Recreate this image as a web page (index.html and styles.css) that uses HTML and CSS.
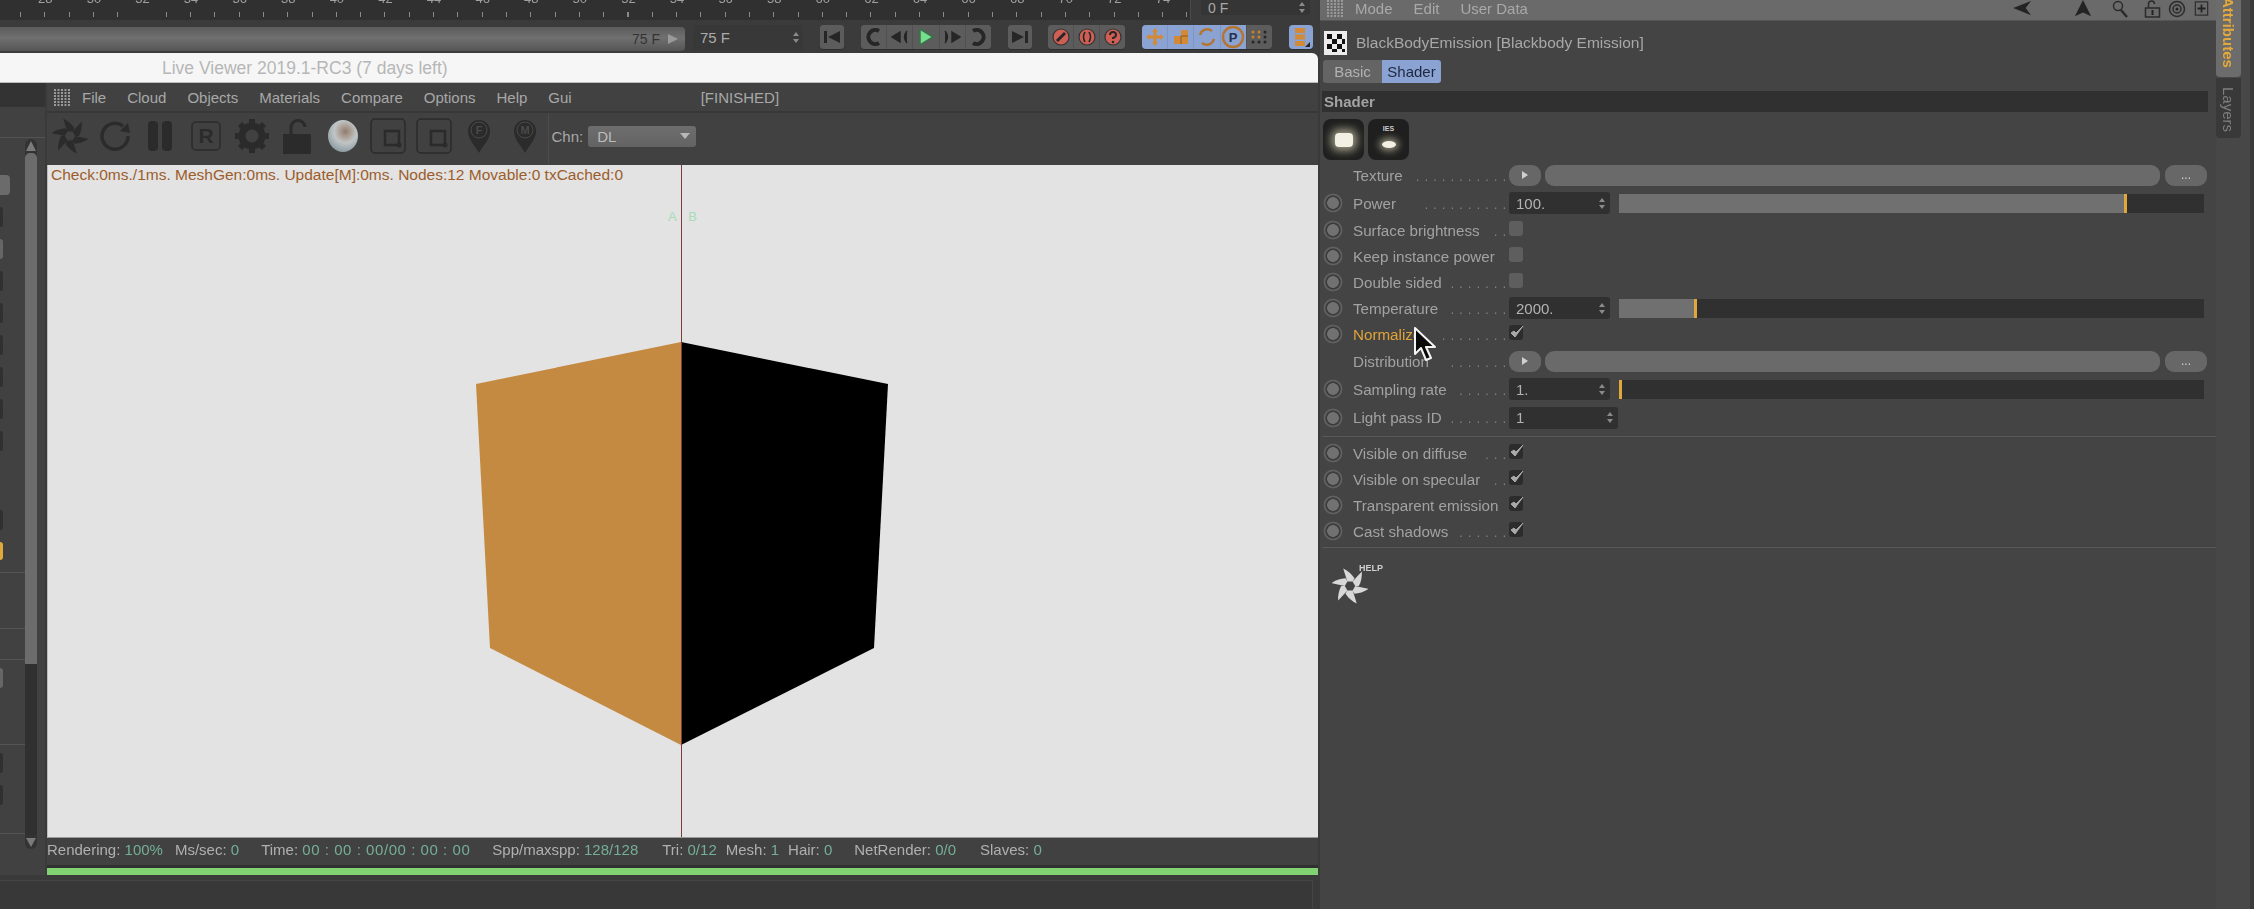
FILE: index.html
```html
<!DOCTYPE html>
<html lang="en">
<head>
<meta charset="utf-8">
<title>Live Viewer</title>
<link rel="stylesheet" href="styles.css">
</head>
<body>
<svg class="defs" width="0" height="0" aria-hidden="true">
  <defs>
    <g id="logo">
      <g id="blades">
        <path id="blade" d="M-3 -5 L-7.500 -19.500 Q0.500 -15.500 5 -8.500 L3 -5 Z"/>
        <use href="#blade" transform="rotate(60)"/>
        <use href="#blade" transform="rotate(120)"/>
        <use href="#blade" transform="rotate(180)"/>
        <use href="#blade" transform="rotate(240)"/>
        <use href="#blade" transform="rotate(300)"/>
      </g>
    </g>
    <g id="gridicon">
      <path d="M0 1h16M0 4h16M0 7h16M0 10h16M0 13h16M0 16h16" stroke-dasharray="2 1.5" stroke-width="2" fill="none"/>
    </g>
    <g id="spin">
      <path d="M3 0 L6 4 H0Z M3 11 L6 7 H0Z"/>
    </g>
    <g id="check">
      <path d="M2 8 L6 12 L14 1 L7 8 L5 6 Z" stroke-width="1" stroke-linejoin="round"/>
    </g>
  </defs>
</svg>
<div class="app">
  <main class="main">
    <section class="timeline">
      <div class="ruler-row">
        <div class="ruler">
          <div class="nums"><span>28</span><span>30</span><span>32</span><span>34</span><span>36</span><span>38</span><span>40</span><span>42</span><span>44</span><span>46</span><span>48</span><span>50</span><span>52</span><span>54</span><span>56</span><span>58</span><span>60</span><span>62</span><span>64</span><span>66</span><span>68</span><span>70</span><span>72</span><span>74</span></div>
          <div class="ticks"></div>
        </div>
        <div class="frame-zero"><span>0 F</span><svg class="spin-ic" width="6" height="11"><use href="#spin"/></svg></div>
      </div>
      <div class="transport">
        <div class="range"><span class="range-val">75 F</span><svg class="range-arrow" width="12" height="12" viewBox="0 0 12 12"><path d="M1 1 L11 6 L1 11Z"/></svg></div>
        <div class="frame-end"><span>75 F</span><svg class="spin-ic" width="6" height="11"><use href="#spin"/></svg></div>
        <div class="grp g-first"><button class="cell"><svg width="20" height="14" viewBox="0 0 20 14"><path d="M2 1h3v12H2z M18 1v12L6 7z"/></svg></button></div>
        <div class="grp g-play">
          <button class="cell"><svg width="18" height="20" viewBox="0 0 18 20"><path d="M14 4 A7 7 0 1 0 14 16" fill="none" stroke-width="4"/></svg></button>
          <button class="cell"><svg width="18" height="14" viewBox="0 0 18 14"><path d="M1 7 L9 2V12Z M16 1 Q11 7 16 13" stroke-width="1.5"/></svg></button>
          <button class="cell"><svg width="20" height="20" viewBox="0 0 20 20"><path class="play" d="M4 2 L17 10 L4 18Z"/></svg></button>
          <button class="cell"><svg width="18" height="14" viewBox="0 0 18 14"><path d="M17 7 L9 2V12Z M2 1 Q7 7 2 13" stroke-width="1.5"/></svg></button>
          <button class="cell"><svg width="18" height="20" viewBox="0 0 18 20"><path d="M4 4 A7 7 0 1 1 4 16" fill="none" stroke-width="4"/></svg></button>
        </div>
        <div class="grp g-last"><button class="cell"><svg width="20" height="14" viewBox="0 0 20 14"><path d="M15 1h3v12h-3z M2 1v12L14 7z"/></svg></button></div>
        <div class="grp g-red">
          <button class="cell"><svg width="20" height="20" viewBox="0 0 20 20"><circle class="red" cx="10" cy="10" r="8"/><path class="nofill" d="M6 14 L14 6" stroke-width="3"/></svg></button>
          <button class="cell"><svg width="20" height="20" viewBox="0 0 20 20"><circle class="red" cx="10" cy="10" r="8"/><path class="nofill" d="M8 5 Q5 10 8 15 M12 5 Q15 10 12 15" stroke-width="1.6"/></svg></button>
          <button class="cell"><svg width="20" height="20" viewBox="0 0 20 20"><circle class="red" cx="10" cy="10" r="8"/><path class="nofill" d="M7 8 Q7 5 10 5 Q13 5 13 8 Q13 10 10 11 V12" stroke-width="2"/><circle cx="10" cy="15" r="1.3"/></svg></button>
        </div>
        <div class="grp g-blue">
          <button class="cell on"><svg width="20" height="20" viewBox="0 0 20 20"><path class="org" d="M10 1 L13 5 H11.5 V8.5 H15 V7 L19 10 L15 13 V11.5 H11.5 V15 H13 L10 19 L7 15 H8.500 V11.500 H5 V13 L1 10 L5 7 V8.500 H8.500 V5 H7Z"/></svg></button>
          <button class="cell on"><svg width="18" height="18" viewBox="0 0 18 18"><path class="org" d="M2 8h7V2h7v14H2z"/><path class="line" d="M9 8v8M9 8h7"/></svg></button>
          <button class="cell on"><svg width="20" height="20" viewBox="0 0 20 20"><path class="org-line" d="M15 4 A7.500 7.500 0 0 0 3 8 M5 16 A7.500 7.500 0 0 0 17 12" /></svg></button>
          <button class="cell on"><svg width="24" height="24" viewBox="0 0 24 24"><circle class="org-line" cx="12" cy="12" r="10"/><text class="p-txt" x="12" y="16.500" text-anchor="middle">P</text></svg></button>
          <button class="cell"><svg width="18" height="16" viewBox="0 0 18 16"><circle class="dot-o" cx="3" cy="3" r="1.500"/><circle class="dot-o" cx="9" cy="3" r="1.500"/><circle cx="15" cy="3" r="1.500"/><circle class="dot-o" cx="3" cy="8" r="1.500"/><circle class="dot-o" cx="9" cy="8" r="1.500"/><circle cx="15" cy="8" r="1.500"/><circle cx="3" cy="13" r="1.500"/><circle cx="9" cy="13" r="1.500"/><circle cx="15" cy="13" r="1.500"/></svg></button>
        </div>
        <div class="grp g-film">
          <button class="cell on"><svg width="18" height="22" viewBox="0 0 18 22"><path class="org" d="M3 2h10v5H3zM3 8.500h10v5H3zM3 15h10v5H3z"/><path d="M13 21 L18 16 V21Z"/></svg></button>
        </div>
      </div>
    </section>

    <section class="viewer">
      <div class="titlebar">Live Viewer 2019.1-RC3 (7 days left)</div>
      <div class="viewer-body">
        <aside class="leftcol">
          <div class="left-dark"></div>
          <div class="left-head"></div>
          <div class="left-body">
            <div class="stubs">
              <div class="stub stub-drop"></div>
              <div class="stub"></div><div class="stub stub-light"></div><div class="stub"></div><div class="stub"></div>
              <div class="stub"></div><div class="stub"></div><div class="stub"></div><div class="stub"></div>
              <div class="stub stub-far"></div>
              <div class="stub stub-org"></div>
              <div class="rule rule-a"></div>
              <div class="rule rule-b"></div>
              <div class="rule rule-c"></div>
              <div class="stub stub-light stub-near"></div>
              <div class="rule rule-d"></div>
              <div class="stub stub-near"></div>
              <div class="stub"></div>
              <div class="rule rule-e"></div>
            </div>
            <div class="scroll">
              <svg class="scroll-arrow" width="12" height="14" viewBox="0 0 12 14"><path d="M6 2 L11 12 H1Z"/></svg>
              <div class="thumb"></div>
              <div class="track"></div>
              <svg class="scroll-arrow" width="12" height="14" viewBox="0 0 12 14"><path d="M1 3 H11 L6 12Z"/></svg>
            </div>
          </div>
        </aside>
        <div class="viewer-main">
          <nav class="menubar">
            <svg class="grid-ic" width="16" height="17"><use href="#gridicon"/></svg>
            <span>File</span><span>Cloud</span><span>Objects</span><span>Materials</span><span>Compare</span><span>Options</span><span>Help</span><span>Gui</span>
            <span class="finished">[FINISHED]</span>
          </nav>
          <div class="toolbar">
            <div class="tool"><svg width="36" height="38" viewBox="-20 -20 40 40"><use href="#logo"/></svg></div>
            <div class="tool"><svg width="32" height="32" viewBox="0 0 32 32"><path class="stroke" d="M24 6 A13 13 0 1 0 29 16" stroke-width="3.500"/><path d="M21 11 L31 13 L29 3Z"/></svg></div>
            <div class="tool"><svg class="pause" width="26" height="32" viewBox="0 0 26 32"><rect x="1" y="1" width="10" height="30" rx="4"/><rect x="15" y="1" width="10" height="30" rx="4"/></svg></div>
            <div class="tool"><svg width="30" height="30" viewBox="0 0 30 30"><rect class="stroke" x="1" y="1" width="28" height="28" rx="4" stroke-width="1.500"/><text class="r-txt" x="15" y="22" text-anchor="middle">R</text></svg></div>
            <div class="tool"><svg width="36" height="36" viewBox="0 0 36 36"><circle class="stroke" cx="18" cy="18" r="10" stroke-width="7"/><path class="stroke" d="M18 1v7M18 28v7M1 18h7M28 18h7M6 6l5 5M25 25l5 5M30 6l-5 5M11 25l-5 5" stroke-width="6"/></svg></div>
            <div class="tool"><svg width="30" height="36" viewBox="0 0 30 36"><path class="stroke" d="M9 17 V10 A7 7 0 0 1 23 9" stroke-width="3"/><rect x="1" y="16" width="28" height="20" rx="1"/></svg></div>
            <div class="tool"><div class="sphere"></div></div>
            <div class="tool"><svg width="36" height="36" viewBox="0 0 36 36"><rect class="stroke" x="1" y="1" width="34" height="34" rx="4" stroke-width="1.500"/><path class="stroke" d="M15 13 H29 V27 H15Z" stroke-width="2.500"/><circle cx="29" cy="27" r="2.500"/></svg></div>
            <div class="tool"><svg width="36" height="36" viewBox="0 0 36 36"><rect class="stroke" x="1" y="1" width="34" height="34" rx="4" stroke-width="1.500"/><path class="stroke" d="M15 13 H29 V27 H15Z" stroke-width="2.500"/><circle cx="29" cy="27" r="2.500"/></svg></div>
            <div class="tool"><svg width="24" height="36" viewBox="0 0 24 36"><path d="M12 35 C8 27 1 22 1 13 A11 11 0 0 1 23 13 C23 22 16 27 12 35Z"/><circle class="pin-hole" cx="12" cy="12" r="8"/><text class="pin-txt" x="12" y="16" text-anchor="middle">F</text></svg></div>
            <div class="tool"><svg width="24" height="36" viewBox="0 0 24 36"><path d="M12 35 C8 27 1 22 1 13 A11 11 0 0 1 23 13 C23 22 16 27 12 35Z"/><circle class="pin-hole" cx="12" cy="12" r="8"/><text class="pin-txt" x="12" y="16" text-anchor="middle">M</text></svg></div>
            <div class="chn">
              <span>Chn:</span>
              <div class="chn-drop"><span>DL</span><svg width="10" height="6" viewBox="0 0 10 6"><path d="M0 0h10L5 6z"/></svg></div>
            </div>
          </div>
          <div class="viewport">
            <div class="stats">Check:0ms./1ms. MeshGen:0ms. Update[M]:0ms. Nodes:12 Movable:0 txCached:0</div>
            <div class="ab"><span>A</span><span>B</span></div>
            <svg class="cube" width="420" height="410" viewBox="0 0 420 410">
              <path class="cube-l" d="M4 42 L209 0 V403 L18 306Z"/>
              <path class="cube-r" d="M209 0 L416 42 L402 306 L209 403Z"/>
            </svg>
            <div class="split"></div>
          </div>
          <div class="status">
            <span class="st">Rendering: <b>100%</b></span>
            <span class="st g12">Ms/sec: <b>0</b></span>
            <span class="st g22">Time: <b class="wide">00 : 00 : 00/00 : 00 : 00</b></span>
            <span class="st g22">Spp/maxspp: <b>128/128</b></span>
            <span class="st g24">Tri: <b>0/12</b></span>
            <span class="st g9">Mesh: <b>1</b></span>
            <span class="st g9">Hair: <b>0</b></span>
            <span class="st g22">NetRender: <b>0/0</b></span>
            <span class="st g24">Slaves: <b>0</b></span>
          </div>
          <div class="progress"><div class="progress-fill"></div></div>
        </div>
      </div>
      <div class="bottom"><div class="bottom-in"></div></div>
    </section>
  </main>

  <aside class="side">
    <div class="attr">
      <header class="attr-head">
        <svg class="grid-ic" width="16" height="17"><use href="#gridicon"/></svg>
        <span>Mode</span><span>Edit</span><span>User Data</span>
        <div class="nav-icons">
          <svg class="n1" width="20" height="16" viewBox="0 0 22 18"><path d="M0 8 L20 0 L14 8 L20 16Z"/></svg>
          <svg class="n2" width="18" height="18" viewBox="0 0 18 20"><path d="M9 0 L18 18 L9 14 L0 18Z"/></svg>
          <svg class="n3" width="16" height="18" viewBox="0 0 16 18"><circle class="stroke" cx="6" cy="6" r="4.500" stroke-width="1.500"/><path class="stroke" d="M9 10 L15 17" stroke-width="2.500"/></svg>
          <svg class="n4" width="17" height="18" viewBox="0 0 16 18"><path class="stroke" d="M1 8h14v9H1zM4 8V4a3 3 0 0 1 6 0" stroke-width="1.500"/><path d="M7 10h2v5H7z"/></svg>
          <svg class="n5" width="20" height="18" viewBox="0 0 18 18"><circle class="stroke" cx="9" cy="9" r="7.500" stroke-width="1.500"/><circle class="stroke" cx="9" cy="9" r="4" stroke-width="1.500"/><circle cx="9" cy="9" r="1.500"/></svg>
          <svg class="n6" width="17" height="15" viewBox="0 0 16 17"><rect class="stroke" x="1" y="1" width="14" height="15" stroke-width="1.300"/><path d="M7 4h2v3.500h3.500v2H9V13H7V9.500H3.500v-2H7z"/></svg>
        </div>
      </header>
      <div class="objtitle">
        <svg width="23" height="24" viewBox="0 0 23 24"><rect class="chk-bg" width="23" height="24"/><path d="M3 3h5v5H3zM13 3h5v5h-5zM8 8h5v5H8zM18 8h3v5h-3zM3 13h5v5H3zM13 13h5v5h-5zM8 18h5v3H8zM18 18h3v3h-3z"/></svg>
        <span>BlackBodyEmission [Blackbody Emission]</span>
      </div>
      <div class="tabs"><span class="tab">Basic</span><span class="tab tab-on">Shader</span></div>
      <div class="section">Shader</div>
      <div class="types">
        <div class="type"><div class="glow-a"></div></div>
        <div class="type"><span class="ies">IES</span><div class="glow-b"></div></div>
      </div>
      <div class="rows">
        <div class="row tall"><i class="noradio"></i><label class="lab"><span>Texture</span><span class="dots">. . . . . . . . . . .</span></label><button class="pill"><svg width="6" height="8"><path d="M0 0l6 4-6 4z"/></svg></button><div class="link"></div><button class="more">...</button></div>
        <div class="row tall"><i class="radio"></i><label class="lab"><span>Power</span><span class="dots">. . . . . . . . . .</span></label><div class="field"><span>100.</span><svg class="spin-ic" width="6" height="11"><use href="#spin"/></svg></div><div class="slider"><div class="fill" style="width:86.3%"></div></div></div>
        <div class="row"><i class="radio"></i><label class="lab"><span>Surface brightness</span><span class="dots">. .</span></label><i class="cb"></i></div>
        <div class="row"><i class="radio"></i><label class="lab"><span>Keep instance power</span></label><i class="cb"></i></div>
        <div class="row"><i class="radio"></i><label class="lab"><span>Double sided</span><span class="dots">. . . . . . .</span></label><i class="cb"></i></div>
        <div class="row"><i class="radio"></i><label class="lab"><span>Temperature</span><span class="dots">. . . . . . .</span></label><div class="field"><span>2000.</span><svg class="spin-ic" width="6" height="11"><use href="#spin"/></svg></div><div class="slider"><div class="fill" style="width:12.9%"></div></div></div>
        <div class="row"><i class="radio"></i><label class="lab lab-on"><span>Normalize</span><span class="dots">. . . . . . . .</span></label><i class="cb cb-on"><svg width="16" height="14"><use href="#check"/></svg></i></div>
        <div class="row tall"><i class="noradio"></i><label class="lab"><span>Distribution</span><span class="dots">. . . . . . .</span></label><button class="pill"><svg width="6" height="8"><path d="M0 0l6 4-6 4z"/></svg></button><div class="link"></div><button class="more">...</button></div>
        <div class="row tall"><i class="radio"></i><label class="lab"><span>Sampling rate</span><span class="dots">. . . . . .</span></label><div class="field"><span>1.</span><svg class="spin-ic" width="6" height="11"><use href="#spin"/></svg></div><div class="slider"><div class="fill" style="width:0"></div></div></div>
        <div class="row tall2"><i class="radio"></i><label class="lab"><span>Light pass ID</span><span class="dots">. . . . . . .</span></label><div class="field field-w"><span>1</span><svg class="spin-ic" width="6" height="11"><use href="#spin"/></svg></div></div>
      </div>
      <div class="sep sep-a"></div>
      <div class="rows">
        <div class="row"><i class="radio"></i><label class="lab"><span>Visible on diffuse</span><span class="dots">. . .</span></label><i class="cb cb-on"><svg width="16" height="14"><use href="#check"/></svg></i></div>
        <div class="row"><i class="radio"></i><label class="lab"><span>Visible on specular</span><span class="dots">. .</span></label><i class="cb cb-on"><svg width="16" height="14"><use href="#check"/></svg></i></div>
        <div class="row"><i class="radio"></i><label class="lab"><span>Transparent emission</span></label><i class="cb cb-on"><svg width="16" height="14"><use href="#check"/></svg></i></div>
        <div class="row"><i class="radio"></i><label class="lab"><span>Cast shadows</span><span class="dots">. . . . . .</span></label><i class="cb cb-on"><svg width="16" height="14"><use href="#check"/></svg></i></div>
      </div>
      <div class="sep sep-b"></div>
      <div class="help">
        <svg class="help-logo" width="36" height="40" viewBox="-20 -20 40 40"><use href="#logo"/></svg>
        <span class="help-txt">HELP</span>
      </div>
    </div>
    <div class="sidetabs">
      <div class="vt vt-on"><span>Attributes</span></div>
      <div class="vt"><span>Layers</span></div>
    </div>
  </aside>
  <svg class="cursor" width="26" height="36" viewBox="0 0 26 36"><path d="M2 1 V27 L8 21 L13 33 L18 31 L13 20 H22Z"/></svg>
</div>
</body>
</html>
```

FILE: styles.css
```css
* { box-sizing: border-box; }
html, body { margin: 0; padding: 0; background: #3c3c3c; overflow: hidden; }
body { width: 2254px; height: 909px; font-family: "Liberation Sans", Arial, sans-serif; color: #a8a8a8; }
button { border: 0; padding: 0; margin: 0; font: inherit; color: inherit; }
.defs { position: absolute; }
.app { position: relative; display: flex; width: 2254px; height: 909px; overflow: hidden; filter: blur(0.55px); }
.main { width: 1318px; display: flex; flex-direction: column; }
.stroke { fill: none; stroke: #2b2b2b; }
.nofill { fill: none; stroke: #2b2b2b; }

/* timeline */
.timeline { height: 53px; background: #3b3b3b; display: flex; flex-direction: column; }
.ruler-row { height: 20px; display: flex; }
.ruler { width: 1191px; height: 20px; background: #303030; border-right: 1px solid #4a4a4a; position: relative; overflow: hidden; }
.nums { display: flex; margin-left: 21px; margin-top: -8px; height: 14px; font-size: 13px; line-height: 14px; color: #a0a0a0; }
.nums span { width: 48.6px; flex: none; text-align: center; }
.ticks { height: 5px; margin-top: 6px; background: repeating-linear-gradient(90deg, transparent 0, transparent 20px, #8a8a8a 20px, #8a8a8a 21px, transparent 21px, transparent 24.3px); }
.frame-zero { width: 109px; height: 15px; margin-left: 10px; background: #353535; border-radius: 0 0 3px 3px; display: flex; align-items: center; justify-content: space-between; padding: 0 5px 0 7px; font-size: 14px; color: #a8a8a8; }
.spin-ic { fill: #8a8a8a; flex: none; }
.transport { height: 33px; display: flex; align-items: flex-start; padding-top: 5px; }
.range { width: 685px; height: 24px; margin-top: 2px; border-radius: 0 4px 4px 0; background: linear-gradient(#5b5b5b, #707070 45%, #555 100%); display: flex; align-items: center; justify-content: flex-end; padding-right: 6px; font-size: 14px; color: #333; }
.range-val { margin-right: 7px; }
.range-arrow { fill: #9a9a9a; }
.frame-end { width: 110px; height: 25px; margin-left: 8px; background: #383838; border-radius: 3px; display: flex; align-items: center; justify-content: space-between; padding: 0 4px 0 7px; font-size: 15px; color: #ababab; }
.grp { display: flex; height: 24px; border-radius: 4px; overflow: hidden; background: #5c5c5c; box-shadow: 0 1px 0 #2e2e2e; }
.cell { flex: 1; display: flex; align-items: center; justify-content: center; background: #5c5c5c; border-left: 1px solid #505050; fill: #262626; stroke: #262626; }
.cell svg { fill: #262626; stroke: none; }
.cell:first-child { border-left: 0; }
.cell svg path[stroke-width] { stroke: #262626; }
.g-first { width: 24px; margin-left: 17px; }
.g-play { width: 130px; margin-left: 17px; }
.g-last { width: 24px; margin-left: 17px; }
.g-red { width: 77px; margin-left: 16px; }
.g-blue { width: 130px; margin-left: 17px; }
.g-film { width: 24px; margin-left: 17px; }
.cell svg .play { fill: #74e08e; stroke: #3c6f49; stroke-width: 1.500; }
.cell svg .red { fill: #cf5f55; stroke: #333; stroke-width: 1.200; }
.cell svg .nofill { stroke: #2a2a2a; }
.on { background: #8aa3d2; border-left-color: #7d96c4; }
.cell svg .org { fill: #d28a36; }
.cell svg .line { fill: none; stroke: #8a5a22; stroke-width: 1; }
.cell svg .org-line { fill: none; stroke: #b5742f; stroke-width: 2.400; }
.cell svg .dot-o { fill: #c8822f; }
.p-txt { font-size: 13px; font-weight: 700; fill: #24304a; }

/* viewer */
.viewer { flex: 1; display: flex; flex-direction: column; min-height: 0; }
.titlebar { height: 30px; background: #f6f6f6; border-radius: 0 6px 0 0; border-bottom: 1px solid #bcbcbc; padding-left: 162px; font-size: 17.500px; line-height: 30px; color: #b6b6b6; }
.viewer-body { height: 792px; display: flex; }
.leftcol { width: 47px; flex: none; display: flex; flex-direction: column; background: #414141; border-right: 2px solid #3a3a3a; }
.left-dark { height: 24px; background: #333; }
.left-head { height: 31px; flex: none; border-bottom: 1px solid #535353; }
.left-body { flex: 1; display: flex; min-height: 0; }
.stubs { width: 25px; display: flex; flex-direction: column; gap: 12px; padding-top: 37px; flex: none; }
.stub { width: 3px; height: 20px; background: #303030; border-radius: 0 4px 4px 0; flex: none; }
.stub-drop { width: 10px; background: #6b6b6b; }
.stub-light { background: #666; }
.stub-org { background: #e0a93c; height: 18px; }
.stub-far { margin-top: 47px; }
.stub-near { margin-top: -4px; }
.rule { height: 1px; width: 25px; background: #555; flex: none; }
.rule-a { margin-top: 0; }
.rule-b { margin-top: 43px; }
.rule-c { margin-top: 18px; }
.rule-d { margin-top: 44px; }
.rule-e { margin-top: 16px; }
.scroll { width: 12px; margin-top: 1px; display: flex; flex-direction: column; align-items: center; background: #333; border-radius: 6px; height: 710px; }
.scroll-arrow { fill: #7a7a7a; flex: none; }
.thumb { width: 100%; height: 511px; background: #6c6c6c; border-radius: 5px 5px 0 0; flex: none; }
.track { width: 100%; flex: 1; background: #303030; }

.viewer-main { flex: 1; display: flex; flex-direction: column; min-width: 0; background: #414141; }
.menubar { height: 30px; display: flex; align-items: center; gap: 21px; padding-left: 7px; font-size: 15px; color: #a8a8a8; border-bottom: 2px solid #383838; flex: none; }
.grid-ic { stroke: #9a9a9a; fill: #9a9a9a; flex: none; margin-right: -9px; }
.finished { margin-left: 108px; }
.toolbar { height: 52px; display: flex; align-items: center; flex: none; padding-bottom: 6px; }
.tool { width: 45.500px; display: flex; align-items: center; justify-content: center; flex: none; fill: #2b2b2b; }
.pause { margin-right: 2px; }
.sphere { width: 30px; height: 32px; border-radius: 50%; background: radial-gradient(circle at 58% 36%, #8a7c72 0, #a59387 14%, #c0c5c6 42%, #93a2a8 72%, #6d7a80 100%); }
.pin-hole { fill: none; stroke: #4a4a4a; stroke-width: 1; }
.pin-txt { font-size: 11px; font-weight: 700; fill: #4a4a4a; }
.r-txt { font-size: 21px; font-weight: 700; fill: #2b2b2b; }
.chn { height: 52px; margin-bottom: -6px; display: flex; align-items: center; gap: 5px; padding: 0 0 6px 3px; border-left: 1px solid #4c4c4c; font-size: 15px; color: #a8a8a8; }
.chn-drop { width: 108px; height: 21px; background: linear-gradient(#6e6e6e, #636363); border-radius: 3px; display: flex; align-items: center; justify-content: space-between; padding: 0 6px 0 9px; color: #bcbcbc; font-size: 15px; }
.chn-drop svg { fill: #b8b8b8; }
.viewport { position: relative; height: 673px; flex: none; background: #e3e3e3; border-left: 1px solid #bbb; border-bottom: 1px solid #999; }
.stats { padding: 2px 0 0 3px; font-size: 15.500px; line-height: 16px; color: #9c5d2b; }
.ab { position: absolute; left: 620px; top: 44px; width: 29px; display: flex; justify-content: space-between; font-size: 13px; color: #a8dcb6; }
.cube { position: absolute; left: 424px; top: 177px; }
.cube-l { fill: #c58a41; }
.cube-r { fill: #000; }
.split { position: absolute; left: 633px; top: 0; bottom: 0; width: 1px; background: #7e3c3c; }
.status { height: 27px; display: flex; align-items: center; font-size: 15px; color: #b0b0b0; flex: none; padding-bottom: 5px; white-space: pre; }
.status b { font-weight: 400; color: #74ae97; }
.status .wide { letter-spacing: 0.55px; }
.g9 { margin-left: 9px; } .g12 { margin-left: 12px; } .g22 { margin-left: 22px; } .g24 { margin-left: 24px; }
.progress { height: 10px; background: #303030; padding-top: 3px; flex: none; }
.progress-fill { height: 7px; background: #80d273; }
.bottom { flex: 1; background: #3a3a3a; padding-top: 5px; }
.bottom-in { height: 100%; width: 1313px; background: #383838; border-top: 1px solid #454545; border-right: 1px solid #454545; }

/* attributes */
.side { width: 936px; display: flex; background: #444; }
.attr { width: 898px; flex: none; display: flex; flex-direction: column; border-left: 2px solid #3a3a3a; }
.attr-head { height: 21px; background: #6a6a6a; border-bottom: 1px solid #555; display: flex; align-items: center; gap: 21px; padding: 0 0 3px 7px; font-size: 15px; color: #a9a9a9; flex: none; }
.attr-head .grid-ic { stroke: #999; margin-right: -9px; }
.nav-icons { flex: 1; height: 18px; display: flex; align-items: center; gap: 6px; justify-content: flex-end; padding-right: 6px; fill: #232323; }
.n1 { margin-right: 35px; } .n2 { margin-right: 14px; } .n3 { margin-right: 10px; }
.objtitle { height: 39px; display: flex; align-items: center; gap: 9px; padding: 5px 0 0 4px; font-size: 15.500px; color: #a8a8a8; flex: none; fill: #111; }
.chk-bg { fill: #ececec; }
.tabs { height: 23px; margin: 0 0 0 3px; display: flex; flex: none; font-size: 15px; line-height: 23px; }
.tab { width: 59px; text-align: center; background: #646464; color: #b2b2b2; border-radius: 3px 0 0 3px; }
.tab-on { background: #8aa3d2; color: #1f2740; border-radius: 0 3px 3px 0; }
.section { height: 21px; margin: 8px 8px 0 2px; background: #303030; font-size: 15px; font-weight: 700; line-height: 22px; padding-left: 2px; color: #a3a3a3; flex: none; }
.types { height: 49px; padding: 7px 0 0 3px; display: flex; gap: 4px; flex: none; }
.type { position: relative; width: 41px; height: 41px; background: #1f1f1f; border-radius: 8px; display: flex; align-items: center; justify-content: center; }
.glow-a { width: 18px; height: 14px; background: #f3f1e6; border-radius: 4px; box-shadow: 0 0 8px 4px rgba(240,236,200,.6); }
.glow-b { width: 14px; height: 7px; margin-top: 9px; background: #f3f1e6; border-radius: 50%; box-shadow: 0 0 7px 3px rgba(240,236,200,.55); }
.ies { position: absolute; top: 6px; left: 0; right: 0; text-align: center; font-size: 7px; font-weight: 700; color: #ccc; }
.rows { display: flex; flex-direction: column; flex: none; }
.row { height: 26px; display: flex; align-items: center; padding-left: 3px; font-size: 15.200px; flex: none; }
.tall { height: 28px; }
.tall2 { height: 29px; }
.radio { width: 20px; height: 20px; flex: none; border-radius: 50%; background: radial-gradient(circle, #717171 0, #717171 5.500px, #3c3c3c 6.200px, #3c3c3c 7.200px, #606060 8px, #606060 9px, transparent 9.800px); }
.noradio { width: 20px; flex: none; }
.lab { width: 154px; margin-left: 10px; display: flex; flex: none; white-space: nowrap; color: #a2a2a2; gap: 4px; align-items: baseline; }
.lab-on { color: #e0a33a; }
.lab .dots { margin-left: auto; color: #868686; font-size: 12px; letter-spacing: 1px; }
.pill { width: 32px; height: 21px; margin-left: 2px; border-radius: 9px; background: #676767; display: flex; align-items: center; justify-content: center; fill: #cfcfcf; flex: none; }
.link { width: 615px; height: 21px; margin-left: 4px; background: #6a6a6a; border-radius: 9px; flex: none; }
.more { width: 42px; height: 21px; margin-left: 5px; border-radius: 9px; background: #676767; color: #cfcfcf; font-size: 12px; line-height: 18px; flex: none; }
.field { width: 101px; height: 22px; margin-left: 2px; background: #303030; border-radius: 3px; display: flex; align-items: center; justify-content: space-between; padding: 0 5px 0 7px; color: #b3b3b3; flex: none; font-size: 15px; }
.field-w { width: 109px; }
.slider { width: 585px; height: 19px; margin-left: 9px; background: #303030; flex: none; display: flex; }
.fill { height: 100%; background: #707070; border-right: 3px solid #e0a83a; box-sizing: content-box; }
.cb { width: 14px; height: 15px; margin: -4px 0 0 2px; background: #5e5e5e; border-radius: 3px; flex: none; position: relative; }
.cb-on { background: #2c2c2c; fill: #a9a9a9; stroke: #a9a9a9; }
.cb-on svg { position: absolute; left: 0; top: 0; }
.sep { height: 1px; background: #595959; margin-left: 2px; flex: none; }
.sep-a { margin-top: 4px; margin-bottom: 3px; }
.sep-b { margin-top: 3px; }
.help { position: relative; padding: 18px 0 0 12px; fill: #d8d8d8; }
.help-txt { position: absolute; left: 39px; top: 15px; font-size: 9px; font-weight: 700; color: #cfcfcf; }
.sidetabs { flex: 1; display: flex; flex-direction: column; background: #474747; border-right: 4px solid #3a3a3a; }
.vt { width: 25px; height: 60px; background: #393939; border-radius: 0 0 4px 4px; writing-mode: vertical-rl; font-size: 15px; color: #7f7f7f; display: flex; align-items: center; padding-top: 9px; }
.vt-on { height: 77px; background: #6c6c6c; color: #e4a93c; font-weight: 700; margin-bottom: 1px; padding: 0 0 9px; justify-content: flex-end; }
.cursor { position: absolute; left: 1413px; top: 327px; fill: #0a0a0a; stroke: #f4f4f4; stroke-width: 2; stroke-linejoin: round; }
```
